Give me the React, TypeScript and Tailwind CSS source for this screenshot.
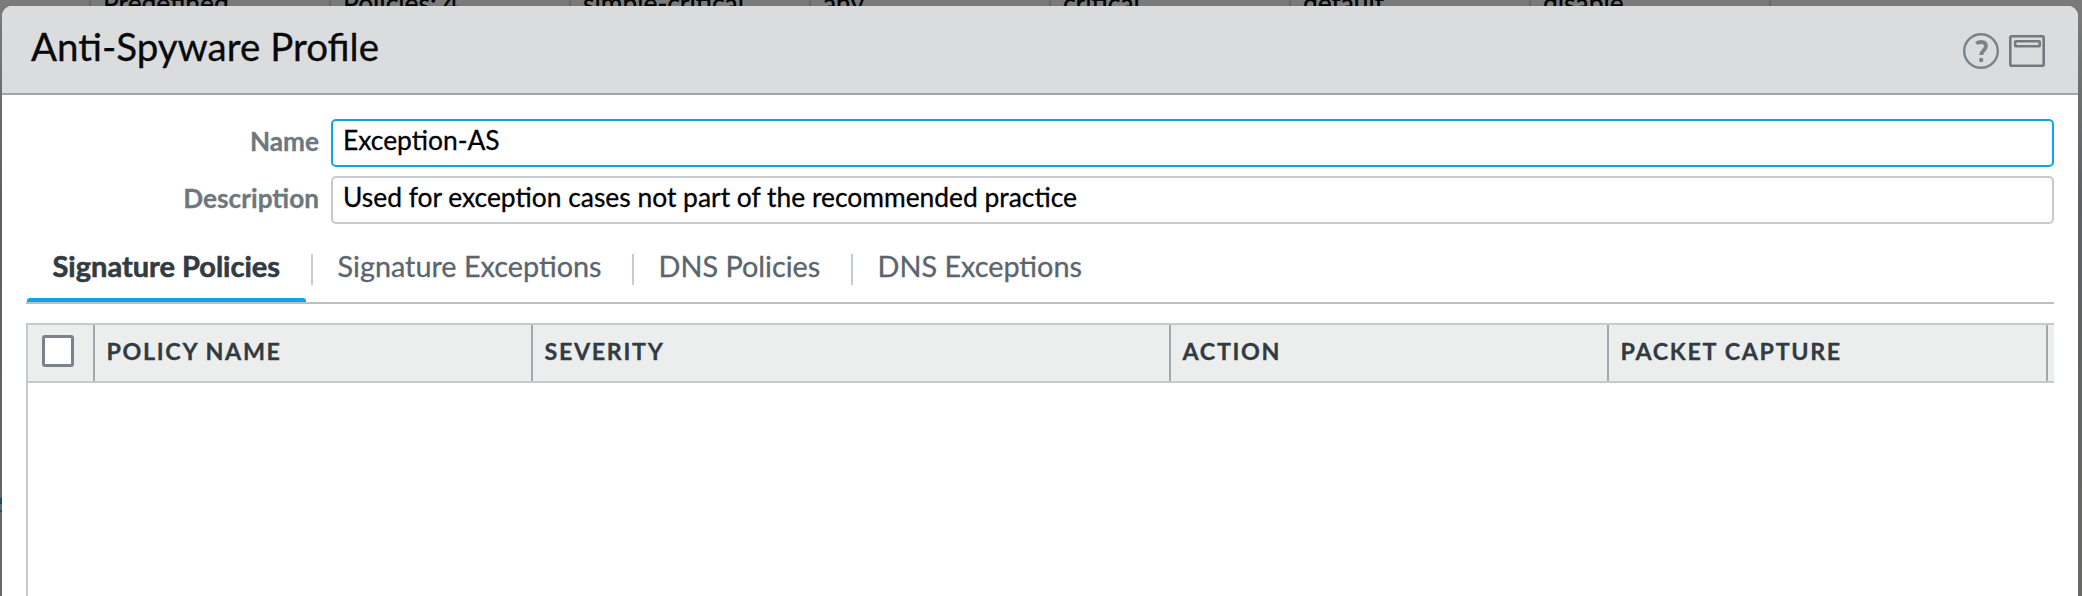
import React from "react";

const backdropCells = ["Predefined", "Policies: 4", "simple-critical", "any", "critical", "default", "disable", ""];

function HelpIcon() {
  return (
    <svg className="h-9 w-9" viewBox="0 0 36 36" fill="none" stroke="#7b838a">
      <circle cx="18" cy="18" r="16.8" strokeWidth="2.400" />
      <path d="M13.4 10.600c1.300-1.100 2.800-1.600 4.600-1.600 3.100 0 5 1.500 5 4.100 0 3.900-4.700 4.100-4.700 8.900" strokeWidth="3.800" />
      <circle cx="18.200" cy="27" r="2.200" fill="#7b838a" stroke="none" />
    </svg>
  );
}

function WindowIcon() {
  return (
    <svg className="h-8 w-9" viewBox="0 0 36 32" fill="none" stroke="#75797e">
      <rect x="1.300" y="1.300" width="33.400" height="29.400" rx="1.500" strokeWidth="2.600" />
      <rect x="6.200" y="6.200" width="24.500" height="5" rx="0.500" strokeWidth="2.600" />
    </svg>
  );
}

function Field({ label, value, focused }: { label: string; value: string; focused?: boolean }) {
  return (
    <div className="flex h-12">
      <label className="w-[293px] pt-[2px] text-right text-[26.2px] leading-[40px] font-bold text-[#6f777e]">{label}</label>
      <div
        className={
          "ml-3 flex-1 rounded-[5px] border-2 bg-white pl-[10px] text-[26.4px] leading-[38px] text-black " +
          (focused ? "border-[#0fa4e6]" : "border-[#c6c9cd]")
        }
      >
        {value}
      </div>
    </div>
  );
}

function Tab({ label, width }: { label: string; width: string }) {
  return (
    <div className={"flex " + width}>
      <span className="mt-[10px] h-[31px] w-[2px] bg-[#c5cbce]" />
      <span className="pl-[24.5px] text-[28.8px] leading-[45px] whitespace-nowrap text-[#5b656f]">{label}</span>
    </div>
  );
}

function Column({ label, width }: { label: string; width: string }) {
  return (
    <div
      className={
        "h-full border-l-2 border-[#a2a8ad] pl-[11.5px] text-[23.3px] leading-[53px] font-bold tracking-[1.65px] whitespace-nowrap text-[#333b42] " +
        width
      }
    >
      {label}
    </div>
  );
}

export default function App() {
  return (
    <div className="relative h-[596px] w-[2082px] overflow-hidden bg-linear-to-b from-[#7b7b7b] via-[#5c6060] via-35% to-[#686866] font-['Lato',sans-serif] [-webkit-text-stroke:0.3px]">
      <div className="absolute top-0 left-[89px] flex h-[6px] w-[2000px] overflow-hidden bg-[#7a7a7a]">
        {backdropCells.map((t, i) => (
          <div key={i} className="h-[6px] w-[240px] shrink-0 border-l-2 border-[#6b6b6b]">
            <div className="-mt-[12px] pl-[12px] text-[26.4px] leading-[30px] whitespace-nowrap text-black">{t}</div>
          </div>
        ))}
      </div>
      <div className="absolute top-[498px] left-0 flex h-[14px] w-[2px] flex-col justify-between">
        <div className="h-[6px] bg-[#12506d]" />
        <div className="h-[2px] bg-[#12506d]" />
      </div>

      <div className="absolute top-[6px] left-[2px] flex h-[590px] w-[2076px] flex-col rounded-t-[10px] bg-white">
        <header className="flex h-[89px] shrink-0 justify-between rounded-t-[10px] border-b-2 border-[#a3a5a9] bg-[#dbdcde] pr-[33px] pl-[29px]">
          <h1 className="text-[38.5px] leading-[81px] text-[#080a0a]">Anti-Spyware Profile</h1>
          <div className="flex gap-[10px] pt-[27px]">
            <HelpIcon />
            <div className="pt-[2px]">
              <WindowIcon />
            </div>
          </div>
        </header>

        <main className="flex flex-1 flex-col pt-6 pr-6 pl-6">
          <div className="flex flex-col gap-[9px]">
            <Field label="Name" value="Exception-AS" focused />
            <Field label="Description" value="Used for exception cases not part of the recommended practice" />
          </div>

          <nav className="mt-5 flex h-[60px] border-b-2 border-[#bebfc1]">
            <div className="w-[280px] pl-[26.5px] text-[29px] leading-[44px] font-bold whitespace-nowrap text-[#333b42] [-webkit-text-stroke:0.6px]">
              <div className="h-[54px]">Signature Policies</div>
              <div className="-ml-[26px] h-1 rounded-t-[3px] bg-[#0fa4e6]" />
            </div>
            <div className="ml-[5px] flex">
              <Tab label="Signature Exceptions" width="w-[321px]" />
              <Tab label="DNS Policies" width="w-[219px]" />
              <Tab label="DNS Exceptions" width="w-[260px]" />
            </div>
          </nav>

          <section className="mt-[19px] flex-1 border-t-2 border-l-2 border-[#c6c9cd]">
            <div className="flex h-[58px] border-b-2 border-[#c6c9cd] bg-[#eceeee]">
              <div className="w-[65px] pt-[10px] pl-[14px]">
                <div className="h-8 w-8 rounded-[3px] border-[3px] border-[#7b8289] bg-white" />
              </div>
              <Column label="POLICY NAME" width="w-[438px]" />
              <Column label="SEVERITY" width="w-[638px]" />
              <Column label="ACTION" width="w-[438px]" />
              <Column label="PACKET CAPTURE" width="w-[439px]" />
              <div className="h-full w-[2px] bg-[#a2a8ad]" />
            </div>
          </section>
        </main>
      </div>
    </div>
  );
}
